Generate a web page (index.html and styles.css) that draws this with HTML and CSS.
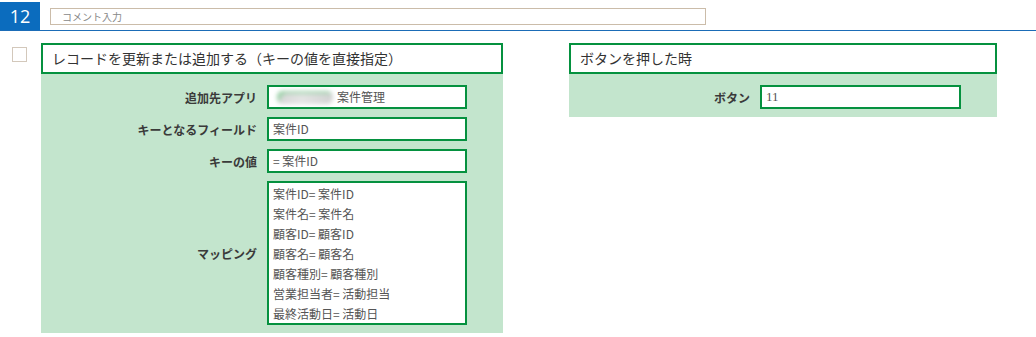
FILE: index.html
```html
<!DOCTYPE html>
<html>

<head>
  <meta charset="utf-8">
  <title>アクション設定</title>
  <link rel="stylesheet" href="styles.css">
</head>

<body>
  <div class="topbar">
    <div class="badge">12</div>
    <div class="comment">コメント入力</div>
  </div>

  <div class="rows">
    <div class="check"></div>

    <div class="block block-left">
      <div class="block-title">レコードを更新または追加する（キーの値を直接指定）</div>
      <div class="panel">
        <div class="label">追加先アプリ</div>
        <div class="field"><span class="blur"></span>案件管理</div>

        <div class="label">キーとなるフィールド</div>
        <div class="field">案件ID</div>

        <div class="label">キーの値</div>
        <div class="field">= 案件ID</div>

        <div class="label">マッピング</div>
        <div class="field multi">
          <div>案件ID= 案件ID</div>
          <div>案件名= 案件名</div>
          <div>顧客ID= 顧客ID</div>
          <div>顧客名= 顧客名</div>
          <div>顧客種別= 顧客種別</div>
          <div>営業担当者= 活動担当</div>
          <div>最終活動日= 活動日</div>
        </div>
      </div>
    </div>

    <div class="block block-right">
      <div class="block-title">ボタンを押した時</div>
      <div class="panel">
        <div class="label">ボタン</div>
        <div class="field serif">11</div>
      </div>
    </div>
  </div>
</body>

</html>
```

FILE: styles.css
```css
* {
  margin: 0;
  padding: 0;
  box-sizing: border-box;
}

body {
  font-family: "Noto Sans CJK JP", "Noto Sans", sans-serif;
  color: #333;
  background: white;
}

.topbar {
  display: flex;
  align-items: flex-start;
  padding-top: 2px;
  border-bottom: 1px solid #1b6cb7;
}

.badge {
  width: 40px;
  height: 28px;
  background: #0b6cbe;
  color: white;
  font-family: "Open Sans", "Noto Sans", sans-serif;
  font-size: 18px;
  line-height: 28px;
  text-align: center;
}

.comment {
  margin: 6px 0 0 10px;
  width: 656px;
  height: 17px;
  border: 1px solid #cbbca9;
  font-size: 10px;
  line-height: 15px;
  padding-left: 11px;
  color: #888;
}

.rows {
  display: flex;
  align-items: flex-start;
  padding-top: 12px;
}

.check {
  width: 15px;
  height: 15px;
  margin: 4px 0 0 12px;
  border: 1px solid #d3c8bb;
}

.block-left {
  width: 462px;
  margin-left: 14px;
}

.block-right {
  width: 428px;
  margin-left: 66px;
}

.block-title {
  height: 31px;
  border: 2px solid #05913f;
  font-size: 14px;
  line-height: 27px;
  padding-left: 9px;
  color: #333;
}

.panel {
  background: #c3e5cd;
  display: grid;
  align-items: center;
  row-gap: 8px;
  column-gap: 10px;
  padding: 11px 0 8px;
}

.block-left .panel {
  grid-template-columns: 216px 200px;
}

.block-right .panel {
  grid-template-columns: 181px 201px;
}

.label {
  text-align: right;
  font-size: 12px;
  font-weight: bold;
  color: #3a3a3a;
}

.field {
  height: 24px;
  background: white;
  border: 2px solid #05913f;
  font-size: 12px;
  line-height: 20px;
  padding: 0 4px;
  color: #555;
  white-space: nowrap;
}

.field.multi {
  height: 144px;
  padding: 1px 4px;
}

.field.serif {
  font-family: "Liberation Serif", serif;
  font-size: 13px;
}

.blur {
  display: inline-block;
  width: 56px;
  height: 13px;
  margin: 0 4px -2px 4px;
  border-radius: 6px;
  background: linear-gradient(90deg, #d6d6d6 0%, #e4e4e4 45%, #d2d2d2 100%);
  box-shadow: 4px 4px 3px -2px #8ccf9c inset;
  filter: blur(2px);
}
```
